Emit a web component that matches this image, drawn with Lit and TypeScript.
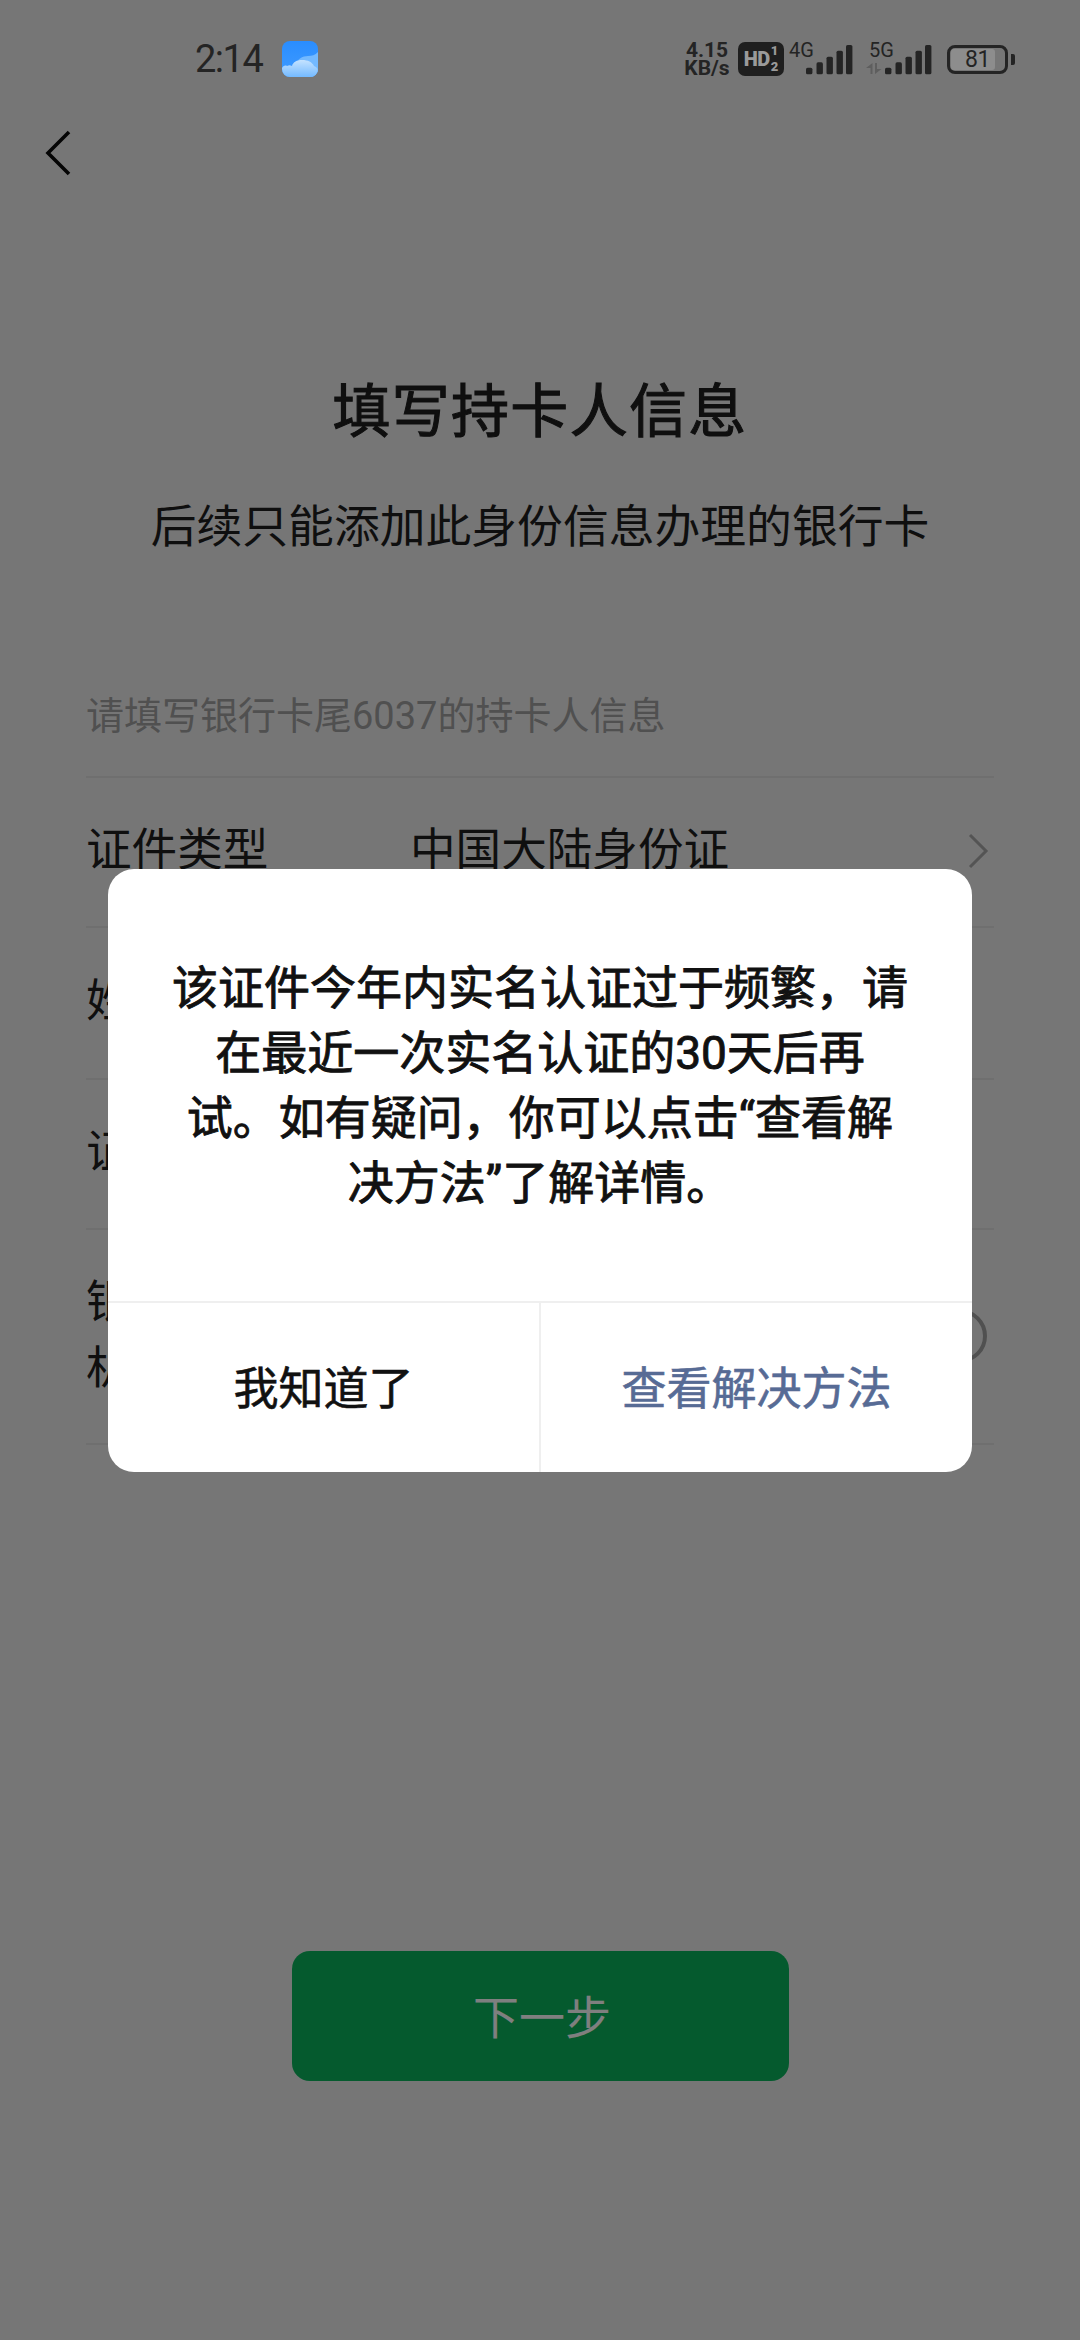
import { LitElement, html, css, svg } from "lit";
import { customElement } from "lit/decorators.js";

const bars = (x0: number) => {
  const xs = [0, 10.5, 20.5, 30.5, 40];
  const tops = [26.7, 21.3, 15.7, 9.7, 4];
  return xs.map(
    (x, i) => svg`<rect x=${x0 + x} y=${tops[i]} width="6.4" height=${33.3 - tops[i]} rx="1.6" fill="#242424"></rect>`
  );
};

@customElement("app-root")
export class AppRoot extends LitElement {
  static styles = css`
    :host {
      display: block;
      width: 1080px;
      height: 2340px;
      position: relative;
      overflow: hidden;
      background: #ededed;
      color: #1e1e1e;
      font-family: Roboto, "Noto Sans CJK SC", sans-serif;
    }
    .status {
      position: relative;
      z-index: 2;
      height: 118px;
      display: flex;
      align-items: center;
      justify-content: space-between;
      padding: 0 65px 0 195px;
      box-sizing: border-box;
      color: #242424;
    }
    .status-left {
      display: flex;
      align-items: center;
      gap: 20px;
      font-size: 38px;
      line-height: 44px;
      letter-spacing: -1.5px;
    }
    .status-right {
      display: flex;
      align-items: center;
      height: 36px;
    }
    .speed {
      display: flex;
      flex-direction: column;
      align-items: center;
      width: 48px;
      font-size: 21px;
      line-height: 18.5px;
      font-weight: 700;
      white-space: nowrap;
      margin-right: 7px;
    }
    .hd {
      width: 46px;
      height: 34px;
      border-radius: 7px;
      background: #1f1f1f;
      color: #9a9a9a;
      display: flex;
      align-items: center;
      justify-content: center;
      font-weight: 900;
      font-size: 20px;
      letter-spacing: -0.4px;
      gap: 1px;
      margin-right: 5px;
    }
    .hd-sub {
      display: flex;
      flex-direction: column;
      font-size: 13px;
      line-height: 16px;
      letter-spacing: 0;
    }
    .signal {
      display: block;
      width: 63px;
      height: 36px;
      margin-right: 14px;
      overflow: visible;
    }
    .signal.second {
      margin-right: 15px;
      width: 66px;
    }
    .signal text {
      font-family: Roboto, sans-serif;
      font-size: 20px;
      fill: #242424;
    }
    .battery {
      display: flex;
      align-items: center;
      gap: 3px;
    }
    .battery-body {
      position: relative;
      width: 61px;
      height: 29px;
      box-sizing: border-box;
      border: 3px solid #242424;
      border-radius: 8px;
      display: flex;
      align-items: center;
      justify-content: center;
      font-size: 23px;
      line-height: 23px;
      letter-spacing: -0.5px;
      overflow: hidden;
    }
    .battery-fill {
      position: absolute;
      left: 1px;
      top: 1px;
      bottom: 1px;
      border-radius: 3px;
      background: #8d8d8d;
    }
    .battery-body span {
      position: relative;
    }
    .battery-nub {
      width: 4px;
      height: 11px;
      border-radius: 0 2px 2px 0;
      background: #242424;
    }
    .nav {
      height: 70px;
      display: flex;
      align-items: center;
      padding-left: 45px;
    }
    .nav svg {
      width: 26px;
      height: 46px;
    }
    .title {
      margin: 184px 0 0;
      text-align: center;
      font-size: 58px;
      line-height: 80px;
      font-weight: 400;
      -webkit-text-stroke: 1.1px currentColor;
      letter-spacing: 1.3px;
    }
    .subtitle {
      margin: 46px 0 0;
      text-align: center;
      font-size: 45.8px;
      line-height: 60px;
    }
    .hint {
      margin: 133px 86px 0;
      padding-bottom: 35px;
      font-size: 38px;
      line-height: 50px;
      color: #a0a0a0;
      border-bottom: 2px solid #dedede;
    }
    .list {
      margin: 0 86px;
    }
    .row {
      box-sizing: border-box;
      display: flex;
      align-items: center;
      padding-bottom: 2px;
      border-bottom: 2px solid #dedede;
      font-size: 45.6px;
      line-height: 66px;
    }
    .row-150 {
      height: 150px;
    }
    .row-152 {
      height: 152px;
    }
    .row-215 {
      height: 215px;
    }
    .label {
      width: 324px;
    }
    .label.narrow {
      width: 235px;
    }
    .value {
      flex: 1;
    }
    .chev {
      width: 22px;
      height: 36px;
      margin-right: 5px;
    }
    .info {
      width: 54px;
      height: 54px;
      margin-right: 7px;
    }
    .next {
      position: absolute;
      left: 292px;
      top: 1951px;
      width: 497px;
      height: 130px;
      padding: 0 0 4px 3px;
      box-sizing: border-box;
      border-radius: 18px;
      background: #0ab45c;
      color: #fff;
      display: flex;
      align-items: center;
      justify-content: center;
      font-size: 46px;
    }
    .scrim {
      position: absolute;
      inset: 0;
      z-index: 1;
      background: rgba(0, 0, 0, 0.5);
      display: flex;
      align-items: center;
      justify-content: center;
    }
    .dialog {
      width: 864px;
      background: #fff;
      border-radius: 26px;
      overflow: hidden;
      color: #111;
    }
    .msg {
      padding: 87px 62px 85px;
      font-size: 46px;
      line-height: 65px;
      font-weight: 400;
      -webkit-text-stroke: 0.9px currentColor;
      text-align: center;
    }
    .actions {
      display: flex;
      height: 171px;
      border-top: 2px solid #efefef;
      box-sizing: border-box;
      font-size: 45px;
      -webkit-text-stroke: 0.6px currentColor;
    }
    .action {
      flex: 1;
      display: flex;
      align-items: center;
      justify-content: center;
      padding-bottom: 4px;
    }
    .action + .action {
      border-left: 2px solid #efefef;
      color: #576b95;
    }
  `;

  render() {
    return html`
      <div class="status">
        <div class="status-left">
          <span>2:14</span>
          <svg width="36" height="36" viewBox="0 0 36 36">
            <defs>
              <linearGradient id="sky" x1="0" y1="0" x2="0" y2="1">
                <stop offset="0" stop-color="#2a8dff"></stop>
                <stop offset="1" stop-color="#3f9bff"></stop>
              </linearGradient>
              <linearGradient id="cl" x1="0" y1="0" x2="0" y2="1">
                <stop offset="0" stop-color="#c4e2ff"></stop>
                <stop offset="1" stop-color="#74baff"></stop>
              </linearGradient>
              <clipPath id="rr"><rect width="36" height="36" rx="8"></rect></clipPath>
            </defs>
            <g clip-path="url(#rr)">
              <rect width="36" height="36" fill="url(#sky)"></rect>
              <path d="M13 26c1-8 8-11 13-11 4 0 7-1 10-4v25H13z" fill="#73b9ff"></path>
              <path d="M0 27c1-2 3-3 5-2 2-1 3-1 5 0 1-4 5-6 10-6 6 0 10 2 12 6 3 1 4 3 4 5v6H0z" fill="url(#cl)"></path>
            </g>
          </svg>
        </div>
        <div class="status-right">
          <div class="speed"><span>4.15</span><span>KB/s</span></div>
          <div class="hd">
            <span>HD</span>
            <span class="hd-sub"><span>1</span><span>2</span></span>
          </div>
          <svg class="signal" viewBox="0 0 63 36">
            <text x="0" y="16">4G</text>
            ${bars(17)}
          </svg>
          <svg class="signal second" viewBox="0 0 66 36">
            <text x="3" y="16">5G</text>
            <path d="M6.500 22v11h-2v-6H0zM9 33V22h2v6h4.500z" fill="#5e5e5e"></path>
            ${bars(19)}
          </svg>
          <div class="battery">
            <div class="battery-body">
              <div class="battery-fill" style="width: ${Math.round(81 * 0.54)}px"></div>
              <span>81</span>
            </div>
            <div class="battery-nub"></div>
          </div>
        </div>
      </div>

      <div class="nav">
        <svg viewBox="0 0 26 46" fill="none" stroke="#0b0b0b" stroke-width="3.600">
          <path d="M24 2L3 23l21 21"></path>
        </svg>
      </div>

      <h1 class="title">填写持卡人信息</h1>
      <p class="subtitle">后续只能添加此身份信息办理的银行卡</p>
      <div class="hint">请填写银行卡尾6037的持卡人信息</div>

      <div class="list">
        <div class="row row-150">
          <div class="label">证件类型</div>
          <div class="value">中国大陆身份证</div>
          <svg class="chev" viewBox="0 0 22 36" fill="none" stroke="#a8a8a8" stroke-width="3">
            <path d="M3 2l16 16L3 34"></path>
          </svg>
        </div>
        <div class="row row-152">
          <div class="label">姓名</div>
        </div>
        <div class="row row-150">
          <div class="label">证件号</div>
        </div>
        <div class="row row-215">
          <div class="label narrow">银行预留手机号</div>
          <div class="value"></div>
          <svg class="info" viewBox="0 0 54 54" fill="none" stroke="#a0a0a0" stroke-width="4">
            <circle cx="27" cy="27" r="25"></circle>
          </svg>
        </div>
      </div>

      <div class="next">下一步</div>

      <div class="scrim">
        <div class="dialog">
          <div class="msg">该证件今年内实名认证过于频繁，请在最近一次实名认证的30天后再试。如有疑问，你可以点击“查看解决方法”了解详情。</div>
          <div class="actions">
            <div class="action">我知道了</div>
            <div class="action">查看解决方法</div>
          </div>
        </div>
      </div>
    `;
  }
}
